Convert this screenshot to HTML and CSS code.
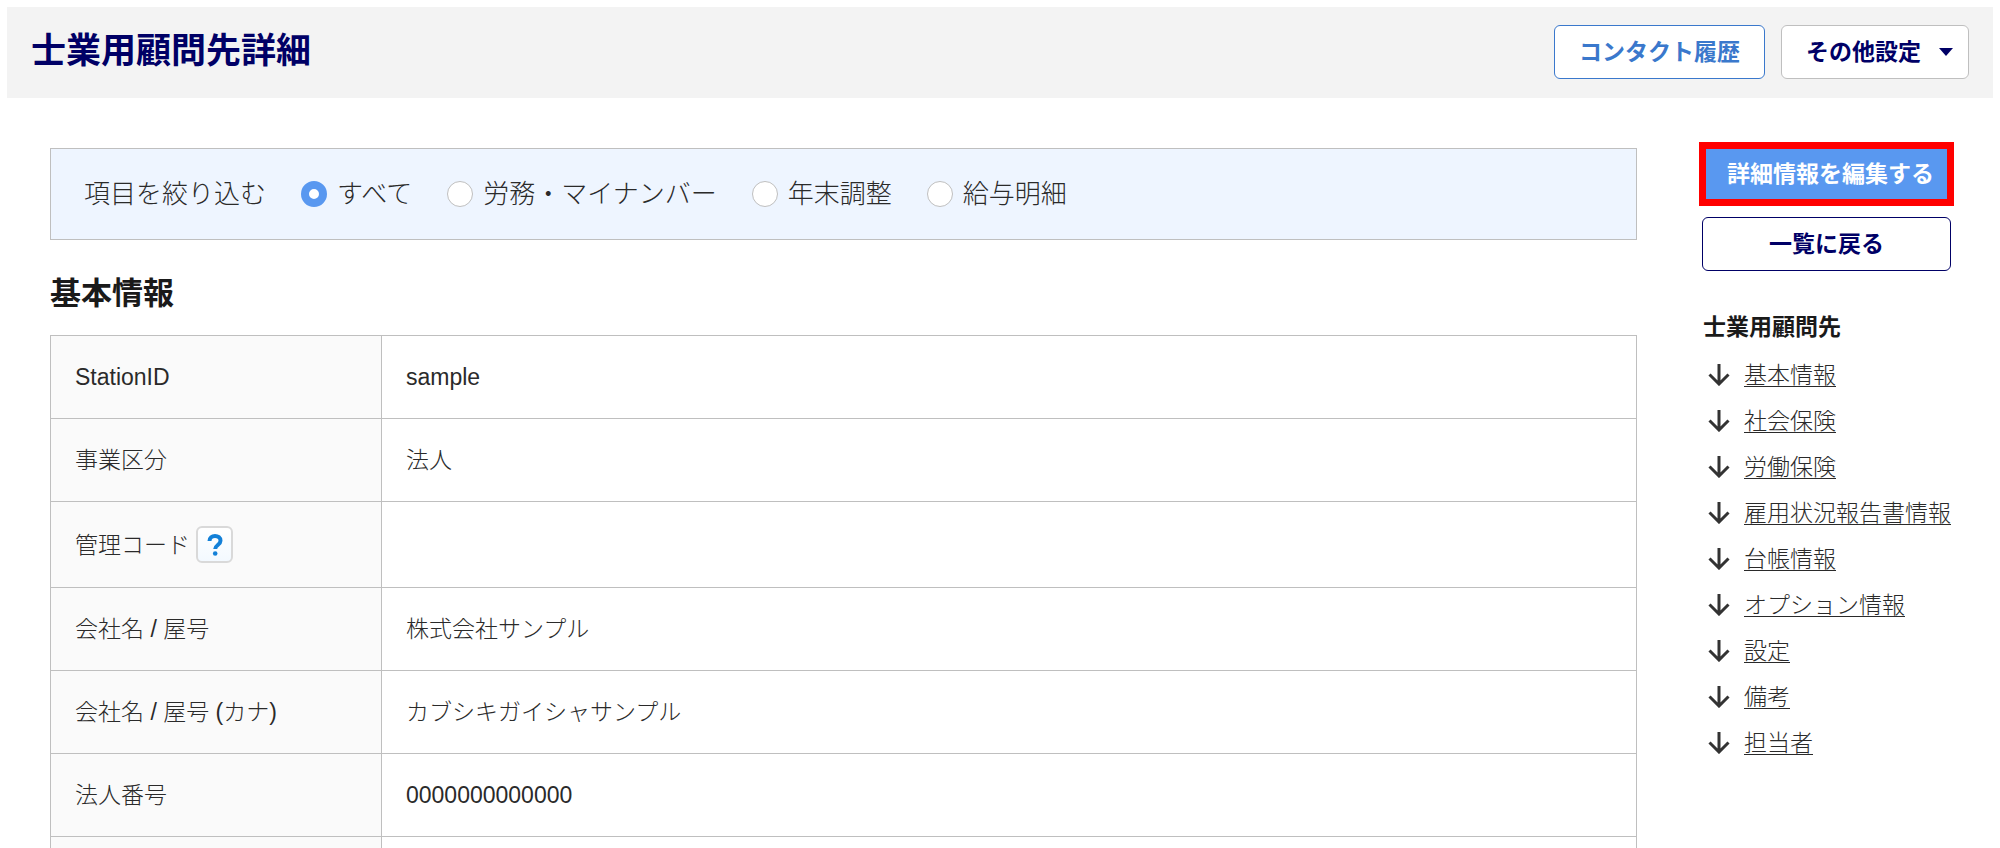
FILE: index.html
```html
<!DOCTYPE html>
<html lang="ja">
<head>
  <meta charset="UTF-8">
  <meta name="viewport" content="width=device-width, initial-scale=1.0">
  <title>士業用顧問先詳細</title>
  <link rel="stylesheet" href="styles.css">
</head>
<body>
  <header class="page-header">
    <h1>士業用顧問先詳細</h1>
    <div class="header-buttons">
      <button type="button" class="btn btn-contact">コンタクト履歴</button>
      <button type="button" class="btn btn-other">その他設定
        <svg class="caret" viewBox="0 0 14 8" width="14" height="8" aria-hidden="true"><path d="M0 0h14L7 8z"/></svg>
      </button>
    </div>
  </header>

  <div class="layout">
    <main class="content">
      <form class="filter">
        <span class="filter-title">項目を絞り込む</span>
        <label><input type="radio" name="filter" checked>すべて</label>
        <label><input type="radio" name="filter">労務・マイナンバー</label>
        <label><input type="radio" name="filter">年末調整</label>
        <label><input type="radio" name="filter">給与明細</label>
      </form>

      <h2 id="basic">基本情報</h2>
      <table class="detail">
        <tr>
          <th scope="row">StationID</th>
          <td>sample</td>
        </tr>
        <tr>
          <th scope="row">事業区分</th>
          <td>法人</td>
        </tr>
        <tr>
          <th scope="row">
            <div class="with-help">管理コード
              <button type="button" class="help">
                <svg viewBox="0 0 16 24" width="16" height="24" aria-hidden="true">
                  <path d="M2.500 8C2.500 4.500 5 3 8 3s5.500 1.500 5.500 4.800c0 4.200-5.300 4.200-5.300 8.200"/>
                  <circle cx="8.200" cy="20.500" r="2.300"/>
                </svg>
              </button>
            </div>
          </th>
          <td></td>
        </tr>
        <tr>
          <th scope="row">会社名 / 屋号</th>
          <td>株式会社サンプル</td>
        </tr>
        <tr>
          <th scope="row">会社名 / 屋号 (カナ)</th>
          <td>カブシキガイシャサンプル</td>
        </tr>
        <tr>
          <th scope="row">法人番号</th>
          <td>0000000000000</td>
        </tr>
        <tr>
          <th scope="row"></th>
          <td></td>
        </tr>
      </table>
    </main>

    <aside class="side">
      <button type="button" class="btn-edit">詳細情報を編集する</button>
      <button type="button" class="btn btn-back">一覧に戻る</button>

      <h3>士業用顧問先</h3>
      <svg class="defs" width="0" height="0" aria-hidden="true">
        <symbol id="arrow" viewBox="0 0 22 22"><path d="M11 0v20M1.500 10.500l9.500 9.500 9.500-9.500"/></symbol>
      </svg>
      <ul class="anchors">
        <li><svg class="arrow"><use href="#arrow"/></svg><a href="#basic">基本情報</a></li>
        <li><svg class="arrow"><use href="#arrow"/></svg><a href="#social">社会保険</a></li>
        <li><svg class="arrow"><use href="#arrow"/></svg><a href="#labor">労働保険</a></li>
        <li><svg class="arrow"><use href="#arrow"/></svg><a href="#report">雇用状況報告書情報</a></li>
        <li><svg class="arrow"><use href="#arrow"/></svg><a href="#ledger">台帳情報</a></li>
        <li><svg class="arrow"><use href="#arrow"/></svg><a href="#option">オプション情報</a></li>
        <li><svg class="arrow"><use href="#arrow"/></svg><a href="#setting">設定</a></li>
        <li><svg class="arrow"><use href="#arrow"/></svg><a href="#note">備考</a></li>
        <li><svg class="arrow"><use href="#arrow"/></svg><a href="#staff">担当者</a></li>
      </ul>
    </aside>
  </div>
</body>
</html>
```
FILE: styles.css
```css
* {
  margin: 0;
  padding: 0;
  box-sizing: border-box;
}

body {
  height: 100vh;
  padding: 7px;
  overflow: hidden;
  background: #fff;
  color: #2a2a2a;
  font-family: "Liberation Sans", "Noto Sans CJK JP", sans-serif;
  font-size: 23px;
  font-weight: 300;
  line-height: 34px;
}

button {
  font-family: inherit;
  font-size: 23px;
  font-weight: bold;
  line-height: 34px;
  cursor: pointer;
}

.page-header {
  display: flex;
  justify-content: space-between;
  align-items: flex-start;
  padding: 18px 24px 19px;
  background: #f3f3f3;
}

.page-header h1 {
  color: #000066;
  font-size: 35px;
  line-height: 52px;
}

.header-buttons {
  display: flex;
  gap: 16px;
}

.btn {
  height: 54px;
  padding: 0 24px;
  border: 1px solid #bfbfbf;
  border-radius: 6px;
  background: #fff;
  color: #000066;
}

.btn-contact {
  border-color: #3a78cc;
  color: #3a78cc;
}

.btn-other {
  display: flex;
  align-items: center;
  gap: 18px;
  padding: 0 15px 0 24px;
}

.caret {
  fill: #000066;
}

.layout {
  display: grid;
  grid-template-columns: 1fr 255px;
  gap: 62px;
  padding: 44px 39px 0 43px;
}

.content {
  padding-top: 6px;
}

.filter {
  display: flex;
  align-items: center;
  gap: 35px;
  padding: 28px 33px;
  border: 1px solid #bfbfbf;
  background: #eef5ff;
  font-size: 26px;
}

.filter label {
  display: flex;
  align-items: center;
  gap: 10px;
}

.filter input {
  appearance: none;
  width: 26px;
  height: 26px;
  border: 1px solid #bfbfbf;
  border-radius: 50%;
  background: #fff;
}

.filter input:checked {
  border: 8px solid #5998f0;
}

h2 {
  margin: 32px 0 19px;
  color: #1a1a1a;
  font-size: 31px;
  line-height: 44px;
}

.detail {
  width: 100%;
  border-collapse: collapse;
}

.detail th,
.detail td {
  height: 83px;
  padding: 0 24px;
  border: 1px solid #bfbfbf;
  text-align: left;
  font-weight: 300;
}

.detail th {
  width: 331px;
  background: #fafafa;
}

.with-help {
  display: flex;
  align-items: center;
  gap: 6px;
  padding: 24px 0;
}

.help {
  display: flex;
  align-items: center;
  justify-content: center;
  width: 37px;
  height: 37px;
  border: 2px solid #d9d9d9;
  border-radius: 6px;
  background: linear-gradient(#fff, #f3f9ff);
}

.help path {
  fill: none;
  stroke: #1380d8;
  stroke-width: 4;
}

.help circle {
  fill: #1380d8;
}

.side {
  display: flex;
  flex-direction: column;
}

.btn-edit {
  height: 64px;
  padding: 0 0 0 8px;
  border: 7px solid #ff0000;
  background: #5998f0;
  color: #fff;
}

.btn-back {
  margin: 11px 3px 0;
  border-color: #000066;
}

.side h3 {
  margin: 39px 0 14px 4px;
  color: #1a1a1a;
  font-size: 23px;
}

.defs {
  display: block;
}

.anchors {
  display: flex;
  flex-direction: column;
  gap: 12px;
  padding-left: 9px;
  list-style: none;
}

.anchors li {
  display: flex;
  align-items: center;
  gap: 14px;
  white-space: nowrap;
}

.anchors a {
  color: #2a2a2a;
  text-decoration-thickness: 1px;
  text-underline-offset: 3px;
}

.arrow {
  width: 22px;
  height: 22px;
  fill: none;
  stroke: #333;
  stroke-width: 3;
}
```
